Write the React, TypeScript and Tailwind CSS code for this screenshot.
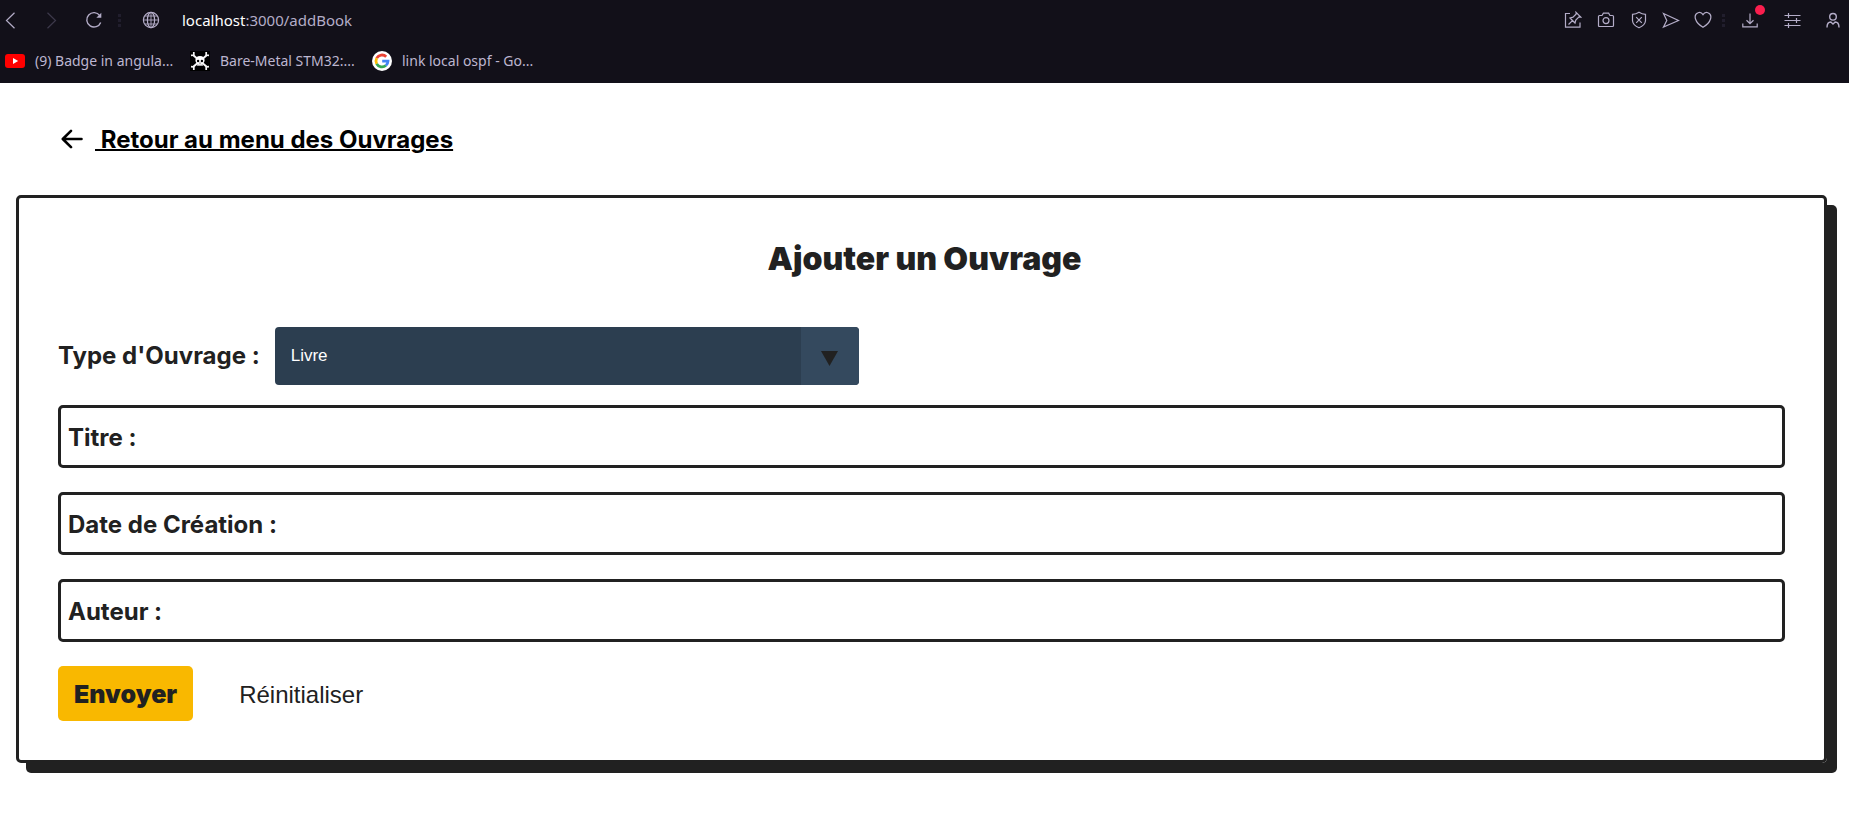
import type { ReactNode } from "react";

function IconButton({ label, className, children }: { label: string; className: string; children: ReactNode }) {
  return (
    <button type="button" aria-label={label} className={`flex h-6 shrink-0 items-center justify-center ${className}`}>
      {children}
    </button>
  );
}

function Dots() {
  return (
    <svg width="3" height="13" viewBox="0 0 3 13" fill="#211e2d" aria-hidden="true">
      <rect width="3" height="3" />
      <rect y="5" width="3" height="3" />
      <rect y="10" width="3" height="3" />
    </svg>
  );
}

const line = { fill: "none", stroke: "currentColor", strokeWidth: 1.2 } as const;

function Toolbar() {
  return (
    <div className="flex h-10 items-center text-[#b4adc8]">
      <IconButton label="Précédent" className="w-5">
        <svg width="11" height="17" viewBox="0 0 11 17" {...line}><path d="M9.500.8 1.500 8.500l8 7.700" /></svg>
      </IconButton>
      <IconButton label="Suivant" className="ml-5 w-[22px] text-[#3d394b]">
        <svg width="11" height="17" viewBox="0 0 11 17" {...line}><path d="m1.500.8 8 7.700-8 7.700" /></svg>
      </IconButton>
      <IconButton label="Actualiser" className="ml-5 w-6">
        <svg width="18" height="18" viewBox="0 0 18 18" {...line} strokeWidth="1.400">
          <path d="M15.700 11.400A7.200 7.200 0 1 1 14.800 4.600" />
          <path d="M16.300 1.800v5h-5z" fill="currentColor" stroke="none" />
        </svg>
      </IconButton>
      <span className="ml-3 flex w-1"><Dots /></span>
      <IconButton label="Informations sur le site" className="ml-5 w-[18px]">
        <svg width="18" height="18" viewBox="0 0 18 18" {...line}>
          <circle cx="9" cy="9" r="7.600" />
          <ellipse cx="9" cy="9" rx="3.600" ry="7.600" />
          <path d="M9 1.400v15.200M1.400 9h15.200M2.700 5h12.600M2.700 13h12.600" strokeWidth="0.900" />
        </svg>
      </IconButton>
      <div className="ml-[22px] min-w-0 flex-1 truncate font-['Noto_Sans',sans-serif] text-[15px]">
        <span className="text-white">localhost</span>:3000/addBook
      </div>
      <IconButton label="Épingler" className="w-8">
        <svg width="18" height="18" viewBox="0 0 18 18" {...line}>
          <path d="M6 2.500H1.500v13.700h14.500v-4.700M4.500 13.500l4.200-4.200M6 7l5 5 .8-3 3.200-3.200 1.700.2-4.700-4.700.2 1.700L9 6.200z" />
        </svg>
      </IconButton>
      <IconButton label="Capture" className="w-[33px]">
        <svg width="18" height="18" viewBox="0 0 18 18" {...line}>
          <path d="M2.500 4.500H5l1.400-2.300h5.200L13 4.500h2.500q1 0 1 1v9q0 1-1 1h-13q-1 0-1-1v-9q0-1 1-1z" />
          <circle cx="9" cy="9.600" r="3" />
        </svg>
      </IconButton>
      <IconButton label="Bloqueur" className="w-[33px]">
        <svg width="18" height="18" viewBox="0 0 18 18" {...line}>
          <path d="M9 1.300q3 2 6.500 2v6.500q-.4 4.500-6.500 7-6.100-2.500-6.500-7V3.300q3.500 0 6.500-2zM6.200 6.200l5.600 5.600M11.800 6.200l-5.600 5.600" />
        </svg>
      </IconButton>
      <IconButton label="Envoyer vers l'appareil" className="w-8">
        <svg width="18" height="18" viewBox="0 0 18 18" {...line}><path d="M1.500 2.500 16.500 9.500 1.500 16l3.300-6.500z" /></svg>
      </IconButton>
      <IconButton label="Favoris" className="w-8">
        <svg width="18" height="18" viewBox="0 0 18 18" {...line}>
          <path d="M9 3.600C7.700 1.500 5.600 1 4 1.700 1.500 2.700.7 5.300 1.500 8c1 3.500 4 6.200 7.500 8.300 3.500-2.100 6.500-4.800 7.500-8.300.8-2.700 0-5.300-2.500-6.300-1.600-.7-3.700-.2-5 1.900z" />
        </svg>
      </IconButton>
      <span className="flex w-2 justify-center"><Dots /></span>
      <IconButton label="Téléchargements" className="relative ml-[2px] w-[42px]">
        <svg width="16" height="16" viewBox="0 0 16 16" {...line}><path d="M8 1.500v10M4.500 8.300 8 11.700l3.500-3.400M.8 11.500v3.300h14.400v-3.300" /></svg>
        <span className="absolute -top-[3px] right-[6px] size-[10px] rounded-full bg-[#fa1e4e]" />
      </IconButton>
      <IconButton label="Réglages" className="w-[42px]">
        <svg width="17" height="16" viewBox="0 0 17 16" {...line}><path d="M.5 3.500h16M.5 8.500h16M.5 13.500h16M4.500 1v5M12.500 6v5M4.500 11v5" /></svg>
      </IconButton>
      <IconButton label="Profil" className="ml-1 w-8">
        <svg width="16" height="16" viewBox="0 0 16 16" {...line} strokeWidth="1.400">
          <circle cx="8" cy="4.800" r="3.300" />
          <path d="M2 15.500q0-5.500 3.800-5.500L8 12l2.200-2q3.800 0 3.800 5.500" />
        </svg>
      </IconButton>
    </div>
  );
}

function Bookmark({ icon, children, className }: { icon: ReactNode; children: ReactNode; className: string }) {
  return (
    <a href="#" className={`flex shrink-0 items-center gap-[10px] whitespace-nowrap ${className}`}>
      {icon}
      <span>{children}</span>
    </a>
  );
}

function Bookmarks() {
  return (
    <nav aria-label="Signets" className="flex h-[43px] items-center pb-[2px] pl-[5px] font-['Noto_Sans',sans-serif] text-[14px] text-[#bdb6d0]">
      <Bookmark
        className="w-[185px]"
        icon={
          <svg width="20" height="20" viewBox="0 0 20 20" aria-hidden="true">
            <rect y="3" width="20" height="14" rx="3" fill="#f00" />
            <path d="m8 7 5.200 3L8 13z" fill="#fff" />
          </svg>
        }
      >
        (9) Badge in angula...
      </Bookmark>
      <Bookmark
        className="w-[182px]"
        icon={
          <svg width="20" height="20" viewBox="0 0 20 20" aria-hidden="true">
            <path d="M0 0h20v20H0z" fill="#000" />
            <path d="m3 4 14 12M17 4 3 16" stroke="#f4f4f4" strokeWidth="2" />
            <path d="M3.800 1v3L1 4.300M16.200 1v3l2.800.3M3.800 19v-3L1 15.700M16.200 19v-3l2.800-.3" stroke="#f4f4f4" strokeWidth="1.700" fill="none" />
            <path d="M10 5c3 0 4.600 1.800 4.600 4.200 0 1.600-.8 2.500-2 3.200V15H7.400v-2.600c-1.200-.7-2-1.600-2-3.200C5.400 6.800 7 5 10 5z" fill="#fff" />
            <circle cx="8.100" cy="10" r="1.200" />
            <circle cx="11.900" cy="10" r="1.200" />
            <path d="M10 11.500v1.300M9 13.700V15M11 13.700V15" stroke="#000" strokeWidth="0.700" />
          </svg>
        }
      >
        Bare-Metal STM32:...
      </Bookmark>
      <Bookmark
        className=""
        icon={
          <svg width="20" height="20" viewBox="0 0 20 20" aria-hidden="true">
            <circle cx="10" cy="10" r="10" fill="#fff" />
            <g fill="none" strokeWidth="2.800">
              <path d="M14.200 5.700A6 6 0 0 0 4.700 7.200" stroke="#ea4335" />
              <path d="M4.700 7.200a6 6 0 0 0 0 5.600" stroke="#fbbc05" />
              <path d="M4.700 12.800a6 6 0 0 0 9.200 1.700" stroke="#34a853" />
              <path d="M13.900 14.500A6 6 0 0 0 16 10.200h-5.800" stroke="#4285f4" />
            </g>
          </svg>
        }
      >
        link local ospf - Go...
      </Bookmark>
    </nav>
  );
}

function Field({ id, label }: { id: string; label: string }) {
  return (
    <div className="flex h-[63px] items-center gap-3 rounded-[5px] border-3 border-[#212121] px-[7px]">
      <label htmlFor={id} className="shrink-0 pt-[2px] text-[24px] font-bold">{label}</label>
      <input id={id} type="text" className="h-full min-w-0 flex-1 bg-transparent text-[24px] outline-none" />
    </div>
  );
}

export default function App() {
  return (
    <div className="min-h-screen bg-white font-[Inter,sans-serif] text-[#212121]">
      <header className="bg-[#121019]">
        <Toolbar />
        <Bookmarks />
      </header>
      <main className="pr-[22px] pl-4">
        <a href="#" className="flex h-28 w-fit items-center gap-3 pl-[45px] text-[24px] font-bold text-black">
          <svg width="22" height="20" viewBox="0 0 22 20" fill="none" stroke="currentColor" strokeWidth="2.600" strokeLinecap="round" strokeLinejoin="round" aria-hidden="true">
            <path d="M20.500 10H2M10 1.800 1.800 10l8.200 8.200" />
          </svg>
          <span className="pt-px underline decoration-2">&nbsp;Retour au menu des Ouvrages</span>
        </a>
        <form className="rounded-[5px] border-3 border-[#212121] px-[39px] pt-[39px] pb-[39px] shadow-[10px_10px_0_#212121]">
          <h1 className="pl-[6px] text-center text-[32px] leading-[44px] font-black">Ajouter un Ouvrage</h1>
          <div className="mt-[46px] flex h-[58px] items-center gap-[15px]">
            <label htmlFor="type" className="text-[24px] font-bold">Type d'Ouvrage :</label>
            <div className="relative h-full w-[584px] overflow-hidden rounded-[4px]">
              <select id="type" defaultValue="Livre" className="size-full appearance-none bg-[#2c3e50] px-4 font-['Liberation_Sans',sans-serif] text-[17px] text-white outline-none">
                <option>Livre</option>
              </select>
              <span className="pointer-events-none absolute inset-y-0 right-0 flex w-[58px] items-center justify-center bg-[#34495e]">
                <svg width="17" height="15" viewBox="0 0 17 15" className="mt-1" fill="#212121" aria-hidden="true"><path d="M0 0h17L8.500 15z" /></svg>
              </span>
            </div>
          </div>
          <div className="mt-5 flex flex-col gap-6">
            <Field id="titre" label="Titre :" />
            <Field id="date" label="Date de Création :" />
            <Field id="auteur" label="Auteur :" />
            <div className="flex items-center gap-[30px]">
              <button type="submit" className="h-[55px] rounded-[5px] bg-[#f9b800] px-4 pt-[2px] text-[25px] font-black">Envoyer</button>
              <button type="reset" className="h-[55px] px-4 pt-[2px] font-['Liberation_Sans',sans-serif] text-[24px]">Réinitialiser</button>
            </div>
          </div>
        </form>
      </main>
    </div>
  );
}
